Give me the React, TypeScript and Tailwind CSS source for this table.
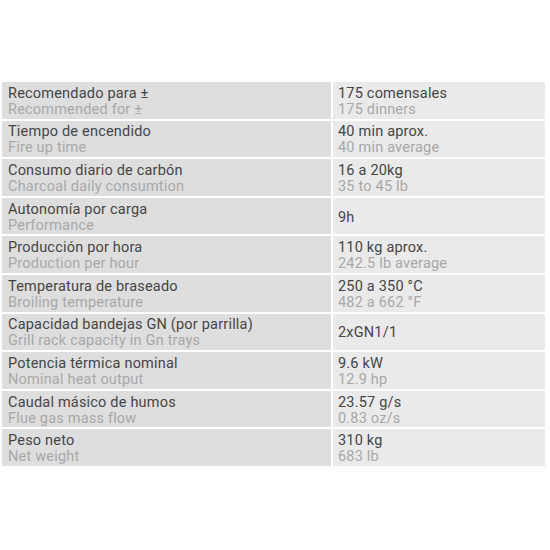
import React from 'react'

const rows: Array<{ es: string; en: string; v1: string; v2?: string }> = [
  { es: 'Recomendado para ±', en: 'Recommended for ±', v1: '175 comensales', v2: '175 dinners' },
  { es: 'Tiempo de encendido', en: 'Fire up time', v1: '40 min aprox.', v2: '40 min average' },
  { es: 'Consumo diario de carbón', en: 'Charcoal daily consumtion', v1: '16 a 20kg', v2: '35 to 45 lb' },
  { es: 'Autonomía por carga', en: 'Performance', v1: '9h' },
  { es: 'Producción por hora', en: 'Production per hour', v1: '110 kg aprox.', v2: '242.5 lb average' },
  { es: 'Temperatura de braseado', en: 'Broiling temperature', v1: '250 a 350 °C', v2: '482 a 662 °F' },
  { es: 'Capacidad bandejas GN (por parrilla)', en: 'Grill rack capacity in Gn trays', v1: '2xGN1/1' },
  { es: 'Potencia térmica nominal', en: 'Nominal heat output', v1: '9.6 kW', v2: '12.9 hp' },
  { es: 'Caudal másico de humos', en: 'Flue gas mass flow', v1: '23.57 g/s', v2: '0.83 oz/s' },
  { es: 'Peso neto', en: 'Net weight', v1: '310 kg', v2: '683 lb' },
]

export default function App() {
  return (
    <div className="w-[550px] h-[550px] bg-white pt-[82px] pl-[2px] font-['Roboto',sans-serif] text-[14.5px] leading-[16px] tracking-[0.2px]">
      <div className="w-[543px] grid grid-cols-[329px_1fr] gap-[2px]">
        {rows.map((r) => (
          <React.Fragment key={r.es}>
            <div className="h-[36.6px] bg-[#dedede] pl-[6px] pt-[3px] flex flex-col justify-center">
              <div className="text-[#454545]">{r.es}</div>
              <div className="text-[#a8a8a8]">{r.en}</div>
            </div>
            <div className="h-[36.6px] bg-[#eaeaea] pl-[5px] pt-[3px] flex flex-col justify-center">
              <div className="text-[#454545]">{r.v1}</div>
              {r.v2 && <div className="text-[#a8a8a8]">{r.v2}</div>}
            </div>
          </React.Fragment>
        ))}
      </div>
    </div>
  )
}
